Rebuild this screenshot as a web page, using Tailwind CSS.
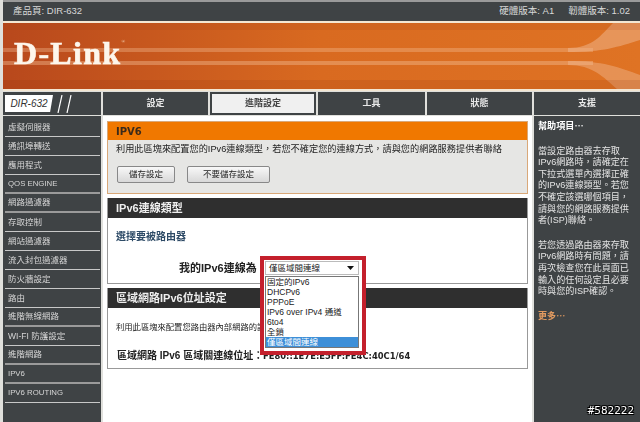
<!DOCTYPE html>
<html lang="zh-Hant">
  <head>
    <meta charset="UTF-8" />
    <title>DIR-632</title>
    <script src="https://cdn.jsdelivr.net/npm/@tailwindcss/browser@4"></script>
  </head>
  <body class="bg-[#e0e0dc] w-[640px] h-[422px] overflow-hidden font-['Liberation_Sans','Noto_Sans_CJK_TC',sans-serif] text-[10px]">
    <div class="relative w-[640px] h-[422px] pl-[3px] bg-[#e0e0dc] blur-[0.35px]">
      <!-- Top bar -->
      <div class="h-[21px] border-t-2 border-[#9a9a9a] bg-[#3f4345] text-[#d8d8d8] flex items-center justify-between pl-[10px] pr-[10px] text-[9.5px]">
        <span>產品頁: DIR-632</span>
        <span class="flex gap-[14px]"><span>硬體版本: A1</span><span>韌體版本: 1.02</span></span>
      </div>

      <!-- Banner -->
      <div class="border-y-2 border-[#f3e6d2] h-[70px] relative overflow-hidden bg-gradient-to-r from-[#b8481c] via-[#d96a20] to-[#df7324]">
        <svg class="absolute inset-0" width="637" height="66" viewBox="0 0 637 66" fill="none">
          <rect x="0" y="25" width="590" height="4" fill="#f6c39a" opacity="0.35" />
          <rect x="0" y="38" width="590" height="4" fill="#f6c39a" opacity="0.4" />
          <path d="M637 0H610C598 12 590 25 565 25V29C600 29 615 24 637 17Z" fill="#f0b890" opacity="0.5" />
          <path d="M637 66H614C600 54 590 42 565 42V38C600 38 615 44 637 52Z" fill="#f0b890" opacity="0.45" />
          <rect x="0" y="0" width="637" height="7" fill="#8a3010" opacity="0.12" />
          <rect x="0" y="57" width="637" height="9" fill="#8a3010" opacity="0.15" />
        </svg>
        <span class="absolute left-[11px] top-[12px] text-[32px] leading-[36px] font-bold font-['Liberation_Serif',serif] text-[#fdf6ec] tracking-[1.3px] [-webkit-text-stroke:0.6px_#fdf6ec]">D-Link<span class="align-top text-[5px] leading-[14px] tracking-normal text-[#f0c8a8] [-webkit-text-stroke:0]">®</span></span>
      </div>

      <!-- Nav row -->
      <div class="flex h-[23px] mt-px gap-[2px]">
        <div class="w-[98px] bg-[#3f4345] flex items-center pl-[2px] gap-[4px]">
          <span class="bg-white w-[48px] h-[17px] flex items-center justify-center italic text-[10px] text-[#333] [clip-path:polygon(0_0,100%_0,94%_100%,0_100%)]">DIR-632</span>
          <svg width="16" height="18" viewBox="0 0 16 18" fill="none" stroke="#ffffff" stroke-width="1.2"><path d="M5 0L1 18M14 0L10 18" /></svg>
        </div>
        <div class="w-[105px] bg-[#3f4345] text-[#e8e8e8] font-bold text-[9px] flex items-center justify-center">設定</div>
        <div class="w-[106px] bg-[#3f4345] p-[2px]"><div class="h-full bg-[#f0f0f0] text-[#444] font-bold text-[9px] flex items-center justify-center">進階設定</div></div>
        <div class="w-[107px] bg-[#3f4345] text-[#e8e8e8] font-bold text-[9px] flex items-center justify-center">工具</div>
        <div class="w-[105px] bg-[#3f4345] text-[#e8e8e8] font-bold text-[9px] flex items-center justify-center">狀態</div>
        <div class="w-[106px] bg-[#3f4345] text-[#e8e8e8] font-bold text-[9px] flex items-center justify-center">支援</div>
      </div>

      <!-- Content -->
      <div class="flex gap-[2px] mt-[1px] h-[308px]">
        <!-- Left menu -->
        <div class="w-[98px] bg-[#3f4345] pt-[2px] text-[#d6d6d6] text-[8.5px]">
          <div class="h-[19px] ml-[2px] w-[95px] border-b border-[#c8c8c8] pl-[3px] flex items-center">虛擬伺服器</div>
          <div class="h-[19px] ml-[2px] w-[95px] border-b border-[#c8c8c8] pl-[3px] flex items-center">通訊埠轉送</div>
          <div class="h-[19px] ml-[2px] w-[95px] border-b border-[#c8c8c8] pl-[3px] flex items-center">應用程式</div>
          <div class="h-[19px] ml-[2px] w-[95px] border-b-2 border-[#9a9a9a] pl-[3px] flex items-center text-[7.8px]">QOS ENGINE</div>
          <div class="h-[19px] ml-[2px] w-[95px] border-b-2 border-[#9a9a9a] pl-[3px] flex items-center">網路過濾器</div>
          <div class="h-[19px] ml-[2px] w-[95px] border-b border-[#c8c8c8] pl-[3px] flex items-center">存取控制</div>
          <div class="h-[19px] ml-[2px] w-[95px] border-b border-[#c8c8c8] pl-[3px] flex items-center">網站過濾器</div>
          <div class="h-[19px] ml-[2px] w-[95px] border-b border-[#c8c8c8] pl-[3px] flex items-center">流入封包過濾器</div>
          <div class="h-[19px] ml-[2px] w-[95px] border-b border-[#c8c8c8] pl-[3px] flex items-center">防火牆設定</div>
          <div class="h-[19px] ml-[2px] w-[95px] border-b border-[#c8c8c8] pl-[3px] flex items-center">路由</div>
          <div class="h-[19px] ml-[2px] w-[95px] border-b-2 border-[#9a9a9a] pl-[3px] flex items-center">進階無線網路</div>
          <div class="h-[19px] ml-[2px] w-[95px] border-b border-[#c8c8c8] pl-[3px] flex items-center">WI-FI 防護設定</div>
          <div class="h-[19px] ml-[2px] w-[95px] border-b-2 border-[#9a9a9a] pl-[3px] flex items-center">進階網路</div>
          <div class="h-[19px] ml-[2px] w-[95px] border-b-2 border-[#9a9a9a] pl-[3px] flex items-center text-[7.8px]">IPV6</div>
          <div class="h-[19px] ml-[2px] w-[95px] border-b border-[#c8c8c8] pl-[3px] flex items-center text-[7.8px]">IPV6 ROUTING</div>
        </div>

        <!-- Main column -->
        <div class="w-[429px] bg-white px-[4px] pt-[5px] flex flex-col gap-[4px]">
          <div class="h-[73px] border border-[#d9a878] bg-[#e6e6e4]">
            <div class="h-[18px] bg-[#f07800] text-[#3a2a1a] font-bold text-[10px] pl-[8px] flex items-center font-['DejaVu_Sans',sans-serif]">IPV6</div>
            <p class="mt-[2px] pl-[8px] text-[#222] text-[9.2px] leading-[14px] whitespace-nowrap">利用此區塊來配置您的IPv6連線類型，若您不確定您的連線方式，請與您的網路服務提供者聯絡</p>
            <div class="flex gap-[12px] mt-[10px] pl-[9px]">
              <button class="w-[58px] h-[17px] border border-[#888] rounded-[2px] bg-gradient-to-b from-[#f8f8f8] to-[#d8d8d8] text-[#222] text-[8.5px] flex items-center justify-center">儲存設定</button>
              <button class="w-[83px] h-[17px] border border-[#888] rounded-[2px] bg-gradient-to-b from-[#f8f8f8] to-[#d8d8d8] text-[#222] text-[8.5px] flex items-center justify-center">不要儲存設定</button>
            </div>
          </div>

          <div class="h-[86px] border-x border-b border-[#999]">
            <div class="h-[20px] bg-[#2f2f2f] text-[#eeeeee] font-bold text-[11px] pl-[8px] flex items-center">IPv6連線類型</div>
            <p class="mt-[12px] pl-[8px] font-bold text-[#2d4a66] text-[10px] leading-[14px]">選擇要被路由器</p>
            <div class="mt-[17px] pl-[71px] font-bold text-[#222] text-[11px] leading-[14px]">我的IPv6連線為：</div>
          </div>

          <div class="h-[81px] border-x border-b border-[#999]">
            <div class="h-[20px] bg-[#2f2f2f] text-[#eeeeee] font-bold text-[11px] pl-[8px] flex items-center">區域網路IPv6位址設定</div>
            <p class="mt-[12px] pl-[8px] text-[#222] text-[8.3px] leading-[14px] whitespace-nowrap">利用此區塊來配置您路由器內部網路的設定</p>
            <p class="mt-[15px] pl-[9px] font-bold text-[#222] text-[10px] leading-[14px] whitespace-nowrap flex">
              <span class="w-[146px]">區域網路 IPv6 區域關連線位址：</span>
              <span class="font-['DejaVu_Sans',sans-serif] text-[8.4px]">FE80::1E7E:E5FF:FE4C:40C1/64</span>
            </p>
          </div>
        </div>

        <!-- Help column -->
        <div class="w-[106px] bg-[#3f4345] text-[#e4e4e4] pl-[4px] pt-[5px] text-[9.1px] leading-[11.6px] whitespace-nowrap">
          <p class="font-bold text-white">幫助項目⋯</p>
          <p class="mt-[13px]">當設定路由器去存取<br />IPv6網路時，請確定在<br />下拉式選單內選擇正確<br />的IPv6連線類型。若您<br />不確定該選哪個項目，<br />請與您的網路服務提供<br />者(ISP)聯絡。</p>
          <p class="mt-[13px]">若您透過路由器來存取<br />IPv6網路時有問題，請<br />再次檢查您在此頁面已<br />輸入的任何設定且必要<br />時與您的ISP確認。</p>
          <p class="mt-[13px] font-bold text-[#e09a60]">更多⋯</p>
        </div>
      </div>

      <!-- Highlighted select -->
      <div class="absolute left-[260px] top-[256px] w-[106px] h-[99px] border-[4px] border-[#c4202c] bg-white">
        <div class="ml-[1px] mt-px w-[94px] h-[14px] border border-[#bbb] flex items-center justify-between pl-[3px] pr-[4px] text-[#222] text-[8.5px] leading-none">
          <span>僅區域間連線</span>
          <svg width="7" height="4" viewBox="0 0 7 4"><path d="M0 0H7L3.5 4Z" fill="#111" /></svg>
        </div>
        <div class="ml-[1px] mt-px w-[94px] border border-[#777] text-[#222] text-[8.5px] leading-[10px]">
          <div class="h-[10px] pl-px">固定的IPv6</div>
          <div class="h-[10px] pl-px">DHCPv6</div>
          <div class="h-[10px] pl-px">PPPoE</div>
          <div class="h-[10px] pl-px whitespace-nowrap">IPv6 over IPv4 通道</div>
          <div class="h-[10px] pl-px">6to4</div>
          <div class="h-[10px] pl-px">全鎖</div>
          <div class="h-[10px] pl-px bg-[#3d8fd8] text-white">僅區域間連線</div>
        </div>
      </div>

      <!-- Watermark -->
      <div class="absolute right-[6px] bottom-[5px] text-white font-['DejaVu_Sans_Mono',monospace] text-[11px] leading-[12px] [text-shadow:1px_1px_0_#000,-1px_-1px_0_#000,1px_-1px_0_#000,-1px_1px_0_#000]">#582222</div>
    </div>
  </body>
</html>
